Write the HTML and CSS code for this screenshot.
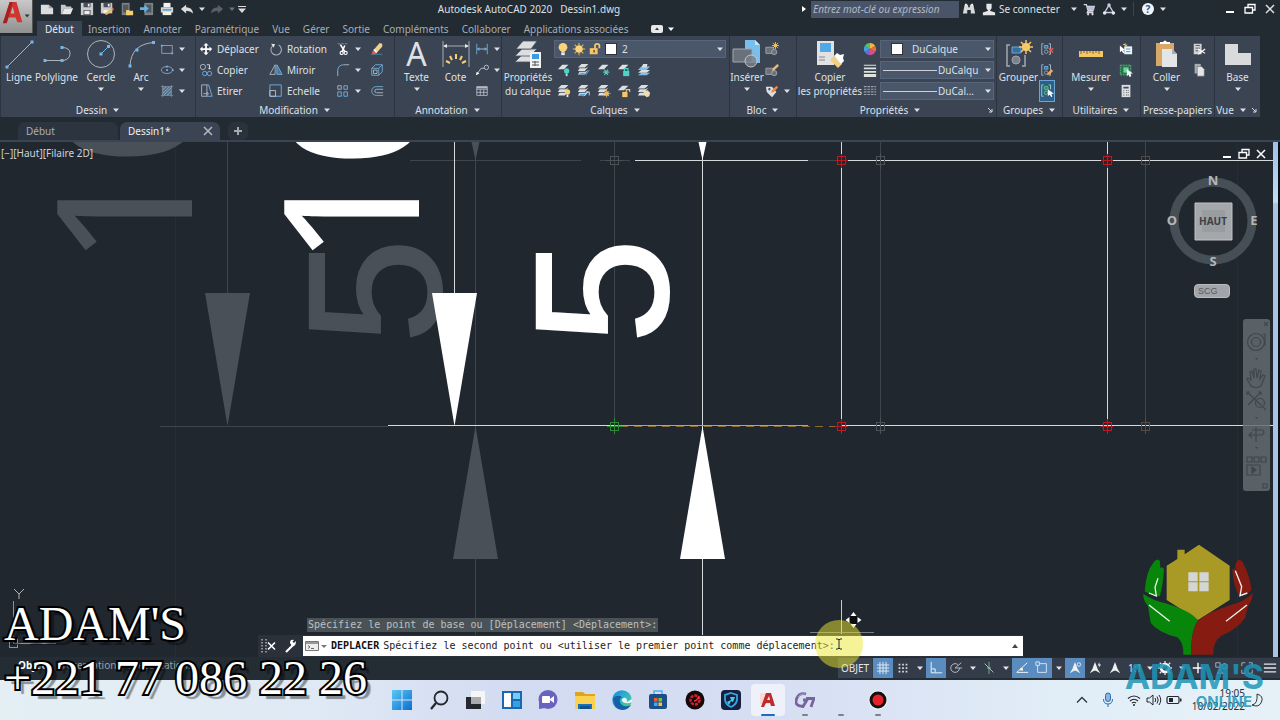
FILE: index.html
```html
<!DOCTYPE html>
<html lang="fr">
<head>
<meta charset="utf-8">
<title>Autodesk AutoCAD 2020 - Dessin1.dwg</title>
<link rel="stylesheet" href="styles.css">
</head>
<body>
<svg class="sprite" aria-hidden="true">
  <symbol id="caret" viewBox="0 0 8 8"><path d="M1 2.500h6L4 6z" fill="currentColor"/></symbol>
  <symbol id="new" viewBox="0 0 16 16"><path d="M1 3h9l5 4v7H1z" fill="#dcdcdc"/><path d="M10 3v4h5z" fill="#9a9ea2"/></symbol>
  <symbol id="open" viewBox="0 0 16 16"><path d="M1 3h5l1 2h6v2H5l-3 7H1z" fill="#c4c6c8"/><path d="M5 7h10l-3 7H2z" fill="#e8e8e8"/></symbol>
  <symbol id="save" viewBox="0 0 16 16"><path d="M1 1h14v14H1z" fill="#c9cbcd"/><path d="M4 1h8v5H4zM4 9h8v6H4z" fill="#4a4f55"/><path d="M5 10h6v4H5zM9 2h2v3H9z" fill="#eee"/></symbol>
  <symbol id="saveas" viewBox="0 0 16 16"><path d="M1 1h13v12H1z" fill="#c9cbcd"/><path d="M4 1h8v5H4z" fill="#4a4f55"/><path d="M9 2h2v3H9zM4 9h5v4H4z" fill="#eee"/><path d="M6 15l1-3 6-5 2 2-6 5z" fill="#f0b95a"/><path d="M13 7l2 2 1-1-2-2z" fill="#e36b5a"/></symbol>
  <symbol id="webopen" viewBox="0 0 16 16"><path d="M2 1h9v14H2z" fill="#7c8186"/><path d="M3.500 3h6v9h-6z" fill="#53585d"/><path d="M7 9h3l1 1h4v5H7z" fill="#f1cf72"/></symbol>
  <symbol id="websave" viewBox="0 0 16 16"><path d="M5 1h10v14H5z" fill="#7c8186"/><path d="M7 3h6v9H7z" fill="#53585d"/><path d="M0 6h5V3l5 4.500L5 12V9H0z" fill="#5fb4ea"/></symbol>
  <symbol id="print" viewBox="0 0 16 16"><path d="M4 1h8v5H4z" fill="#f2f2f2"/><path d="M1 6h14v6H1z" fill="#d2d4d6"/><path d="M3 8h10v2H3z" fill="#58a9d8"/><path d="M3 11h10v4H3z" fill="#f4f1df"/></symbol>
  <symbol id="undo" viewBox="0 0 16 16"><path d="M1 8l6-5v3q7 0 8 7-3-3-8-3v3z" fill="#dcdcdc"/></symbol>
  <symbol id="redo" viewBox="0 0 16 16"><path d="M15 8L9 3v3q-7 0-8 7 3-3 8-3v3z" fill="#596066"/></symbol>
  <symbol id="more" viewBox="0 0 8 8"><path d="M0 1h8v1H0zM0 3.500h8L4 8z" fill="#dcdcdc"/></symbol>
  <symbol id="bino" viewBox="0 0 16 16"><path d="M3 3h4v3h2V3h4l2 10h-5V9H6v4H1z" fill="#d6d8da"/><path d="M3.500 2h2v2h-2zM10.500 2h2v2h-2z" fill="#fff"/></symbol>
  <symbol id="person" viewBox="0 0 16 16"><path d="M5 2h6v5l-2 3 6 2v3H1v-3l6-2-2-3z" fill="#e4e6e8"/></symbol>
  <symbol id="cart" viewBox="0 0 16 16"><path d="M2 3h3l2 7h6M6 5h8l-1 4H7M7 10l-1 2h7" fill="none" stroke="#d6d8e4" stroke-width="1.500"/><path d="M6 5h8l-1 4H7z" fill="#b9bdd6"/><circle cx="7" cy="14" r="1.300" fill="#ddd"/><circle cx="12" cy="14" r="1.300" fill="#ddd"/></symbol>
  <symbol id="tri" viewBox="0 0 16 16"><path d="M8 3.500L13 12H3z" fill="none" stroke="#c6cadf" stroke-width="1.600"/><circle cx="8" cy="3.500" r="2" fill="#c6cadf"/><circle cx="3" cy="12.500" r="2" fill="#e7e9f2"/><circle cx="13" cy="12.500" r="2" fill="#e7e9f2"/></symbol>
  <symbol id="min" viewBox="0 0 12 12"><path d="M2 8h8v2H2z" fill="#fff"/></symbol>
  <symbol id="restore" viewBox="0 0 12 12"><path d="M4 4V1.500h7V7H8.500M1 4.500h7.500V10H1z" fill="none" stroke="#fff" stroke-width="1.300"/></symbol>
  <symbol id="close" viewBox="0 0 12 12"><path d="M2 2l8 8M10 2l-8 8" fill="none" stroke="currentColor" stroke-width="1.500"/></symbol>
  <symbol id="ruban" viewBox="0 0 12 8"><rect x="0" y="0" width="12" height="8" rx="2" fill="#e8e8e8"/><path d="M4 5h4L6 2.500z" fill="#333"/></symbol>

  <symbol id="ligne" viewBox="0 0 30 30"><path d="M3 28L28 3" stroke="#aeb4bc" fill="none"/><path d="M1.500 26.500h3v3h-3zM26.500 1.500h3v3h-3z" fill="#6fb7ec"/></symbol>
  <symbol id="poly" viewBox="0 0 30 30"><path d="M3 21.500h18q7-1 7-7t-8-6" stroke="#aeb4bc" fill="none"/><path d="M1.500 20h3v3h-3zM18.500 7h3v3h-3zM18.500 20h3v3h-3z" fill="#6fb7ec"/></symbol>
  <symbol id="cercle" viewBox="0 0 30 30"><circle cx="15" cy="15" r="13.500" stroke="#aeb4bc" fill="none"/><path d="M15 15l7-7" stroke="#6fb7ec" fill="none"/><path d="M13.500 13.500h3v3h-3zM21 6h3v3h-3z" fill="#6fb7ec"/></symbol>
  <symbol id="arc" viewBox="0 0 30 30"><path d="M4 27Q5 5 28 3.500" stroke="#aeb4bc" fill="none"/><path d="M2.500 25.500h3v3h-3zM9.500 9.500h3v3h-3zM26 2h3v3h-3z" fill="#6fb7ec"/></symbol>
  <symbol id="rect" viewBox="0 0 16 16"><path d="M2 4h12v9H2z" stroke="#9aa2ab" fill="none"/><path d="M1 3h2v2H1zM13 12h2v2h-2z" fill="#6fb7ec"/></symbol>
  <symbol id="ellipse" viewBox="0 0 16 16"><ellipse cx="8" cy="8" rx="6.500" ry="4" stroke="#9aa2ab" fill="none"/><path d="M7 7h2v2H7zM7 3h2v2H7zM13.500 7h2v2h-2z" fill="#6fb7ec"/></symbol>
  <symbol id="hatch" viewBox="0 0 16 16"><path d="M3 3h10v10H3z" fill="#5a6b7c"/><path d="M3 7l4-4M3 11l8-8M4 13l9-9M8 13l5-5" stroke="#7cb8e4"/><path d="M3 1v14M13 1v14M1 3h14M1 13h14" stroke="#9aa2ab" fill="none" stroke-width=".7"/></symbol>
  <symbol id="move" viewBox="0 0 16 16"><path d="M8 1l3 3H9v3h3V5l3 3-3 3V9H9v3h2l-3 3-3-3h2V9H4v2L1 8l3-3v2h3V4H5z" fill="#fff"/></symbol>
  <symbol id="copy" viewBox="0 0 16 16"><g fill="none"><circle cx="4.500" cy="4.500" r="3" stroke="#b4bac2"/><circle cx="6.500" cy="12" r="2.500" stroke="#6fb7ec"/><circle cx="12" cy="12" r="2.500" stroke="#6fb7ec"/><path d="M9 2h3v5M10.500 5.500L12 7l1.500-1.500" stroke="#e4e6e8"/></g></symbol>
  <symbol id="stretch" viewBox="0 0 16 16"><path d="M3 1v13h6V1zM5 11h5M9 9l2 2-2 2" stroke="#b4bac2" fill="none"/><path d="M9 1h2l4 13H9" stroke="#6fb7ec" fill="none"/></symbol>
  <symbol id="rotate" viewBox="0 0 16 16"><path d="M11 3.500a6 6 0 1 1-7 1" stroke="#aab0b8" stroke-width="1.200" fill="none"/><path d="M2.500 2L7 2.500 5 6.500z" fill="#e4e6e8"/></symbol>
  <symbol id="mirror" viewBox="0 0 16 16"><path d="M7 2v11H1z" stroke="#b4bac2" fill="none"/><path d="M9 2v11h6z" stroke="#6fb7ec" fill="#4d7396"/></symbol>
  <symbol id="scale" viewBox="0 0 16 16"><path d="M1 1h13v13H1z" stroke="#6fb7ec" fill="none"/><path d="M1 7.500h6.500V14H1z" stroke="#c4c8ce" fill="none"/></symbol>
  <symbol id="trim" viewBox="0 0 16 16"><path d="M2 2h12" stroke="#8d949c" stroke-dasharray="3 1"/><path d="M5 3l5 8M10 4l-3 7" stroke="#fff" stroke-width="1.800"/><circle cx="6.500" cy="12.500" r="1.800" stroke="#fff" fill="none" stroke-width="1.300"/><circle cx="11" cy="12.500" r="1.800" stroke="#fff" fill="none" stroke-width="1.300"/></symbol>
  <symbol id="fillet" viewBox="0 0 16 16"><path d="M2 15V9" stroke="#b4bac2"/><path d="M2 9q0-7 7-7" stroke="#6fb7ec" fill="none"/><path d="M9 2h6" stroke="#b4bac2"/></symbol>
  <symbol id="array" viewBox="0 0 16 16"><g fill="none"><path d="M2 2h4v4H2z" stroke="#b4bac2"/><path d="M9 2h4v4H9zM2 9h4v5H2zM9 9h4v5H9z" stroke="#6fb7ec"/></g></symbol>
  <symbol id="erase" viewBox="0 0 16 16"><path d="M1 14h13" stroke="#3f88b8"/><path d="M4 9l7-8 3 1v3l-7 8z" fill="#f2cf92"/><path d="M4 9l3 4-1 1H3l-1-2z" fill="#e05f4c"/><path d="M5 8l3 3.500-1 1L4 9z" fill="#fff"/></symbol>
  <symbol id="cube" viewBox="0 0 16 16"><path d="M2 6h8v8H2zM2 6l4-4h8v8l-4 4M10 6l4-4" stroke="#72b0dd" fill="none"/><path d="M4 8h4v4H4z" stroke="#b4bac2" fill="none"/></symbol>
  <symbol id="offset" viewBox="0 0 16 16"><path d="M15 3H7a5 5 0 0 0 0 10h8" stroke="#72b0dd" fill="none"/><path d="M15 6H7.500a2 2 0 0 0 0 4H15" stroke="#b4bac2" fill="none"/></symbol>
  <symbol id="cote" viewBox="0 0 30 30"><path d="M2 2v26M28 2v26M3 7h24" stroke="#a6acb4" fill="none"/><path d="M2 7l4-2v4zM28 7l-4-2v4z" fill="#e4e6e8"/><path d="M15 15v5M9 17l2 4M21 17l-2 4M5 22l4 2M25 22l-4 2" stroke="#f6cf74" stroke-width="2"/></symbol>
  <symbol id="dim" viewBox="0 0 16 16"><path d="M2 2v12M14 2v12" stroke="#72b0dd"/><path d="M3 8h10" stroke="#a9cdea"/><path d="M2 8l3-2v4zM14 8l-3-2v4z" fill="#72b0dd"/></symbol>
  <symbol id="leader" viewBox="0 0 16 16"><path d="M2 13l5-7h4" stroke="#c4c8ce" fill="none"/><path d="M1 14l1-4 3 2z" fill="#fff"/><circle cx="13" cy="5" r="2.500" stroke="#c4c8ce" fill="none"/></symbol>
  <symbol id="table" viewBox="0 0 16 16"><path d="M2 3h12v10H2zM2 6h12M2 9.500h12M6 6v7M10 6v7" stroke="#b4bac2" fill="none"/><path d="M2 3h12v2H2z" fill="#b4bac2"/></symbol>
  <symbol id="layers" viewBox="0 0 30 30"><g fill="#dcdee0" stroke="#4b535f" stroke-width=".8"><path d="M2 23l7-7h15l-7 7z"/><path d="M2 17l7-7h15l-7 7z"/><path d="M3 10l7-8h14l-6 8z"/></g><path d="M17 13h11v16H17z" fill="#f3f3f3"/><path d="M19 15h7v5h-7z" fill="#3d9be0"/><path d="M19 23h7M19 26h7M22 22v5" stroke="#555"/></symbol>
  <symbol id="bulb" viewBox="0 0 16 16"><circle cx="8" cy="6" r="5" fill="#f8d57c"/><path d="M6 10h4v2H6z" fill="#f8d57c"/><path d="M6 12h4v3H6z" fill="#e8e8e8"/></symbol>
  <symbol id="sun" viewBox="0 0 16 16"><circle cx="8" cy="8" r="4" fill="#f8d57c"/><path d="M8 1v14M1 8h14M3 3l10 10M13 3L3 13" stroke="#f2b84d" stroke-width="1.200"/><circle cx="8" cy="8" r="4" fill="#f8d57c"/></symbol>
  <symbol id="lock" viewBox="0 0 16 16"><path d="M2 7h9v7H2z" fill="#f6c568"/><path d="M8 7V4q0-2 2.500-2T13 4v3" stroke="#f6c568" stroke-width="2" fill="none"/><path d="M6 9h2v3H6z" fill="#8a5b20"/></symbol>
  <symbol id="l1" viewBox="0 0 16 16"><path d="M1 7l5-5h7L8 7z" fill="#dcdee0"/></symbol>
  <symbol id="l3" viewBox="0 0 16 16"><g fill="#dcdee0"><path d="M1 5l4-4h8L9 5zM1 9l2-3h7l3-2-4 5zM1 13l2-3h7l3-2-4 5z"/></g></symbol>
  <symbol id="la" viewBox="0 0 16 16"><use href="#l1"/><circle cx="11" cy="9" r="3" fill="#4fd3c4"/><path d="M10 12h2v3h-2z" fill="#bfe9e4"/></symbol>
  <symbol id="lb" viewBox="0 0 16 16"><use href="#l3"/><path d="M2 13l2-2h6l-2 2z" fill="#55a9e2"/><path d="M10 14l4-6" stroke="#55a9e2"/></symbol>
  <symbol id="lc" viewBox="0 0 16 16"><use href="#l1"/><path d="M7 10.500h7M8.500 7.500l4 6M12.500 7.500l-4 6" stroke="#57c9bd" stroke-width="1.300"/></symbol>
  <symbol id="ld" viewBox="0 0 16 16"><use href="#l1"/><path d="M7 9h7v6H7z" fill="#4fd3c4"/><path d="M8.500 9V6.500h4V9" fill="none" stroke="#4fd3c4" stroke-width="1.300"/></symbol>
  <symbol id="le" viewBox="0 0 16 16"><path d="M1 8l4-4h10l-4 4zM1 14l4-3h10l-4 3z" fill="#7cc0ee"/><path d="M1 11l4-3h10l-4 3zM5 5l2-4h5l-1 4z" fill="#dcdee0"/></symbol>
  <symbol id="lf" viewBox="0 0 16 16"><use href="#l3"/><circle cx="12" cy="9" r="3" fill="#f6cf74"/><path d="M11 12h2v3h-2z" fill="#eee"/></symbol>
  <symbol id="lg" viewBox="0 0 16 16"><use href="#l3"/><path d="M2 13l2-2h7l-2 2z" fill="#55a9e2"/><path d="M8 14l5-5M10 9h4v4" stroke="#cfe6f8" fill="none"/></symbol>
  <symbol id="lh" viewBox="0 0 16 16"><use href="#l3"/><circle cx="11" cy="11" r="2.500" fill="#f6cf74"/><path d="M11 6.500v9M6.500 11h9M8 8l6 6M14 8l-6 6" stroke="#f2b84d"/></symbol>
  <symbol id="li" viewBox="0 0 16 16"><use href="#l1"/><path d="M6 9h6v6H6z" fill="#f6c568"/><path d="M10.500 9V6.500h4V9" fill="none" stroke="#f6c568" stroke-width="1.300"/></symbol>
  <symbol id="lj" viewBox="0 0 16 16"><use href="#l3"/><path d="M8 8l4-1 3 3-1 4-3 1-4-4z" fill="#f0dcae"/></symbol>
  <symbol id="insert" viewBox="0 0 30 30"><path d="M13 1h10l5 5v18H13z" fill="#79bfee"/><path d="M23 1v5h5z" fill="#c6e3f7"/><path d="M1 10h19v13H1z" fill="#6a717a" stroke="#a2a8ae"/><circle cx="19" cy="22" r="6" fill="#7a818a" fill-opacity=".8" stroke="#c2c6ca"/></symbol>
  <symbol id="blk" viewBox="0 0 16 16"><path d="M1 6h9v7H1z" fill="#6a717a" stroke="#a2a8ae"/><circle cx="10.500" cy="11.500" r="3" fill="#6a717a" stroke="#a2a8ae"/></symbol>
  <symbol id="bnew" viewBox="0 0 16 16"><use href="#blk"/><circle cx="12" cy="4" r="2" fill="#f6cf74"/><path d="M12 0v8M8 4h8M9 1l6 6M15 1L9 7" stroke="#f2c05a"/></symbol>
  <symbol id="bedit" viewBox="0 0 16 16"><use href="#blk"/><path d="M8 9l1-3 5-5 2 2-5 5z" fill="#f2b868"/></symbol>
  <symbol id="btag" viewBox="0 0 16 16"><path d="M1 3h7l5 6-5 6-6-6z" fill="#dcdee0"/><circle cx="5" cy="6" r="1.300" fill="#444"/><path d="M7 10l1-3 5-5 2 2-5 5z" fill="#e98a4d"/></symbol>
  <symbol id="match" viewBox="0 0 30 30"><path d="M2 2h17v24H2z" fill="#e2e2e2"/><path d="M5 4h11v9H5z" fill="#52a8e6"/><path d="M4 18h6M4 21h6" stroke="#888"/><path d="M15 21l8 8 4-4-8-8z" fill="#f5cf7c"/><path d="M19 17l3-3 3 2 4-1-1 4 1 3-3 3z" fill="#fff"/></symbol>
  <symbol id="wheel" viewBox="0 0 16 16"><path d="M8 8V1a7 7 0 0 1 6 3.500z" fill="#f3b53c"/><path d="M8 8l6-3.500a7 7 0 0 1 0 7z" fill="#ef6b3c"/><path d="M8 8l6 3.500A7 7 0 0 1 8 15z" fill="#d94f8a"/><path d="M8 8v7a7 7 0 0 1-6-3.500z" fill="#7a62d8"/><path d="M8 8l-6 3.500a7 7 0 0 1 0-7z" fill="#3fa5e0"/><path d="M8 8L2 4.500A7 7 0 0 1 8 1z" fill="#53c26b"/></symbol>
  <symbol id="weight" viewBox="0 0 16 16"><path d="M1 2h14v1H1zM1 5h14v2H1zM1 9h14v2H1zM1 12.500h14V16H1z" fill="#dfe3dc"/></symbol>
  <symbol id="ltype" viewBox="0 0 16 16"><path d="M1 3h14M1 6h14M1 9h14M1 12h14" stroke="#9aa1a9" stroke-width="1.300" stroke-dasharray="3 1"/></symbol>
  <symbol id="launch" viewBox="0 0 8 8"><path d="M2 2l4 4M6 3v3H3" stroke="#d6dade" fill="none"/></symbol>
  <symbol id="group" viewBox="0 0 30 30"><path d="M6 6H3v21h3M18 27h3V16" stroke="#a2a8ae" fill="none" stroke-width="1.500"/><path d="M8 8h9v6H8z" fill="#356f9f" stroke="#6fa6cf"/><circle cx="12" cy="21" r="4" fill="#7a818a" stroke="#a2a8ae"/><circle cx="22" cy="8" r="4" fill="#f8d57c"/><path d="M22 1v14M15 8h14M17 3l10 10M27 3L17 13" stroke="#f5c862" stroke-width="1.500"/></symbol>
  <symbol id="g" viewBox="0 0 16 16"><path d="M4 2H2v12h2M10 2h2v12h-2" stroke="#b4bac2" fill="none"/><path d="M5 4h4v3H5z" stroke="#6fb7ec" fill="#356f9f"/><circle cx="7" cy="11" r="2" stroke="#9aa1a9" fill="none"/></symbol>
  <symbol id="ungroup" viewBox="0 0 16 16"><use href="#g"/><path d="M10 7l5 5M15 7l-5 5" stroke="#e2574c" stroke-width="1.800"/></symbol>
  <symbol id="gedit" viewBox="0 0 16 16"><use href="#g"/><path d="M8 14l1-3 4-4 2 2-4 4z" fill="#f2a95c"/></symbol>
  <symbol id="gsel" viewBox="0 0 16 16"><path d="M4 1H2v13h2M10 1h2v5" stroke="#a9d8c0" fill="none"/><path d="M5 3h4v3H5z" stroke="#5fd08a" fill="#2c7c57"/><circle cx="7" cy="10" r="2" stroke="#5fd08a" fill="none"/><path d="M9 6v8l2-2 2 3 1-1-1-3h3z" fill="#fff"/></symbol>
  <symbol id="ruler" viewBox="0 0 30 30"><path d="M3 12h24v6H3z" fill="#f3c763"/><path d="M5 12v3M8 12v2M11 12v3M14 12v2M17 12v3M20 12v2M23 12v3" stroke="#8a6420"/></symbol>
  <symbol id="qsel" viewBox="0 0 16 16"><path d="M6 5h9v9H6z" fill="#eef4f8"/><path d="M8 8h5M8 11h5" stroke="#3a8fce"/><path d="M1 4v8l2-2 2 3 1-1-1-3h2z" fill="#fff"/><path d="M4 3l4-2-1 2h3L7 6V4z" fill="#f6cf74"/></symbol>
  <symbol id="selall" viewBox="0 0 16 16"><path d="M1.500 2.500h12v11h-12z" stroke="#58c486" stroke-dasharray="2 1" fill="#2f6d51"/><path d="M5 5h6v6H5z" fill="#67d895"/><path d="M9 7v8l2-2 1 3 2-1-1-3h3z" fill="#fff"/></symbol>
  <symbol id="calc" viewBox="0 0 16 16"><path d="M3 1h10v14H3z" fill="#dcdee0"/><path d="M5 3h6v2H5zM5 7h1v1H5zM8 7h1v1H8zM10 7h1v1h-1zM5 9h1v1H5zM8 9h1v1H8zM10 9h1v1h-1zM5 12h1v1H5zM8 12h1v1H8zM10 12h1v1h-1z" fill="#444b54"/></symbol>
  <symbol id="paste" viewBox="0 0 30 30"><path d="M4 4h18v23H4z" fill="#d9a866"/><path d="M8 5V3h3q2-3 4 0h3v2z" fill="#fff"/><path d="M10 10h10l5 5v13H10z" fill="#e4e5e7"/><path d="M20 10v5h5z" fill="#a8abaf"/></symbol>
  <symbol id="cut" viewBox="0 0 16 16"><path d="M2 2h9v12H2z" fill="#cfd1d3"/><path d="M4 4h5M4 7h5M4 10h3" stroke="#555"/><path d="M7 8l8 5M7 14l8-6" stroke="#fff" stroke-width="1.300"/></symbol>
  <symbol id="copyc" viewBox="0 0 16 16"><path d="M3 1h7v11H3z" fill="#a9adb1"/><path d="M6 4h5l3 3v8H6z" fill="#e4e5e7" stroke="#5a6068" stroke-width=".6"/></symbol>
  <symbol id="base" viewBox="0 0 30 30"><path d="M2 5h13v9h13v12H2z" fill="#d9dadc"/></symbol>

  <symbol id="sgrid" viewBox="0 0 16 16"><path d="M4.500 1v14M8 1v14M11.500 1v14M1 4.500h14M1 8h14M1 11.500h14" stroke="#e8f1f8"/></symbol>
  <symbol id="sdots" viewBox="0 0 16 16"><path d="M3 3h2v2H3zM7 3h2v2H7zM11 3h2v2h-2zM3 7h2v2H3zM7 7h2v2H7zM11 7h2v2h-2zM3 11h2v2H3zM7 11h2v2H7zM11 11h2v2h-2z" fill="#d6dade"/></symbol>
  <symbol id="sortho" viewBox="0 0 16 16"><path d="M2.500 1v12.500H15M3 9h4v4" stroke="#fff" fill="none"/></symbol>
  <symbol id="spolar" viewBox="0 0 16 16"><path d="M12 8a5 5 0 1 1-2-4M7 8l7-6M7 8h8" stroke="#c4c8ce" fill="none"/></symbol>
  <symbol id="siso" viewBox="0 0 16 16"><path d="M3 3l10 10" stroke="#c4c8ce"/><path d="M8 1v14" stroke="#6fbf75"/><path d="M6 8h4" stroke="#c4c8ce"/></symbol>
  <symbol id="strack" viewBox="0 0 16 16"><path d="M14 2L2 13h13" stroke="#fff" fill="none"/><path d="M6 8h3v3H6z" fill="#f4f4d4"/></symbol>
  <symbol id="sosnap" viewBox="0 0 16 16"><path d="M3 3h10v10H3z" stroke="#dceafa" fill="none"/><path d="M1 1h4v4H1z" stroke="#dceafa" fill="#5b8cc0"/></symbol>
  <symbol id="sann" viewBox="0 0 16 16"><path d="M8 1q2 5 3 8l3 5-5-3H7l-5 3 3-5q1-3 3-8z" fill="#eef0f2"/></symbol>
  <symbol id="sannv" viewBox="0 0 16 16"><use href="#sann"/><circle cx="12.500" cy="4" r="2" fill="none" stroke="#eef0f2"/></symbol>
  <symbol id="sanna" viewBox="0 0 16 16"><use href="#sann"/><path d="M13 1l-2 4h2l-1 3 3-4h-2z" fill="#eef0f2"/></symbol>
  <symbol id="sgear" viewBox="0 0 16 16"><circle cx="8" cy="8" r="4.500" fill="none" stroke="#fff" stroke-width="3"/><path d="M8 0v4M8 12v4M0 8h4M12 8h4M2 2l3 3M11 11l3 3M14 2l-3 3M5 11l-3 3" stroke="#e0e4e8" stroke-width="1.500"/></symbol>
  <symbol id="splus" viewBox="0 0 16 16"><path d="M8 2v12M2 8h12" stroke="#fff" stroke-width="1.600"/></symbol>
  <symbol id="sshape" viewBox="0 0 16 16"><path d="M2 2h5v5H2zM4 14l3-5 3 5z" stroke="#b4bac2" fill="none"/><circle cx="12" cy="6" r="3" stroke="#b4bac2" fill="none"/></symbol>
  <symbol id="sfull" viewBox="0 0 16 16"><path d="M2 6V2h4M10 2h4v4M14 10v4h-4M6 14H2v-4" stroke="#b4bac2" fill="none"/></symbol>
  <symbol id="smenu" viewBox="0 0 16 16"><path d="M1 3.500h14M1 8h14M1 12.500h14" stroke="#e4e6e8" stroke-width="1.500"/></symbol>

  <linearGradient id="gwin" x1="0" y1="0" x2="1" y2="1"><stop offset="0" stop-color="#5cc8f5"/><stop offset="1" stop-color="#0a6fd0"/></linearGradient>
  <linearGradient id="gedge" x1="0" y1="0" x2="1" y2="1"><stop offset="0" stop-color="#1a86d8"/><stop offset=".5" stop-color="#2fb7c9"/><stop offset="1" stop-color="#5ed160"/></linearGradient>
</svg>

<div class="app">
  <header class="head">
    <button class="logo" aria-label="Menu de l'application"><svg viewBox="0 0 33 33"><path d="M3 23L10 1h7l6 21h-5l-2-5H9l-2 5zM11 13h4l-2-7z" fill="#d2342e"/><path d="M10 1h3L7 23H3z" fill="#a81f20"/><path d="M25.500 14h5L28 17z" fill="#333"/></svg></button>
    <div class="head-main">
      <div class="titlebar">
        <div class="quick">
          <button class="ic" aria-label="Nouveau"><svg><use href="#new"/></svg></button>
          <button class="ic" aria-label="Ouvrir"><svg><use href="#open"/></svg></button>
          <button class="ic" aria-label="Enregistrer"><svg><use href="#save"/></svg></button>
          <button class="ic" aria-label="Enregistrer sous"><svg><use href="#saveas"/></svg></button>
          <button class="ic" aria-label="Ouvrir Web"><svg><use href="#webopen"/></svg></button>
          <button class="ic" aria-label="Enregistrer Web"><svg><use href="#websave"/></svg></button>
          <button class="ic" aria-label="Imprimer"><svg><use href="#print"/></svg></button>
          <button class="ic" aria-label="Annuler"><svg><use href="#undo"/></svg></button>
          <button class="ic thin" aria-label="Historique"><svg class="car"><use href="#caret"/></svg></button>
          <button class="ic" aria-label="Rétablir"><svg><use href="#redo"/></svg></button>
          <button class="ic thin dim" aria-label="Historique"><svg class="car"><use href="#caret"/></svg></button>
          <button class="ic thin" aria-label="Personnaliser"><svg class="car"><use href="#more"/></svg></button>
        </div>
        <h1 class="title"><span>Autodesk AutoCAD 2020</span><span>Dessin1.dwg</span></h1>
        <div class="infobar">
          <svg class="play" viewBox="0 0 8 8"><path d="M2 1v6l4-3z" fill="#fff"/></svg>
          <input class="search" type="text" aria-label="Recherche" placeholder="Entrez mot-clé ou expression">
          <button class="ic" aria-label="Rechercher"><svg><use href="#bino"/></svg></button>
          <button class="ic" aria-label="Compte"><svg><use href="#person"/></svg></button>
          <button class="signin">Se connecter</button>
          <button class="ic thin" aria-label="Options du compte"><svg class="car"><use href="#caret"/></svg></button>
          <button class="ic" aria-label="App Store"><svg><use href="#cart"/></svg></button>
          <button class="ic" aria-label="Rester connecté"><svg><use href="#tri"/></svg></button>
          <button class="ic thin" aria-label="Plus"><svg class="car"><use href="#caret"/></svg></button>
          <span class="sep"></span>
          <button class="ic" aria-label="Aide"><span class="help">?</span></button>
          <button class="ic thin" aria-label="Options d'aide"><svg class="car"><use href="#caret"/></svg></button>
          <div class="win">
            <button class="ic" aria-label="Réduire"><svg class="s12"><use href="#min"/></svg></button>
            <button class="ic" aria-label="Restaurer"><svg class="s12"><use href="#restore"/></svg></button>
            <button class="ic" aria-label="Fermer"><svg class="s12"><use href="#close"/></svg></button>
          </div>
        </div>
      </div>
      <nav class="tabs">
        <button class="tab on">Début</button><button class="tab">Insertion</button><button class="tab">Annoter</button><button class="tab">Paramétrique</button><button class="tab">Vue</button><button class="tab">Gérer</button><button class="tab">Sortie</button><button class="tab">Compléments</button><button class="tab">Collaborer</button><button class="tab">Applications associées</button>
        <button class="tab toggle" aria-label="Réduire le ruban"><svg class="rb"><use href="#ruban"/></svg><svg class="car"><use href="#caret"/></svg></button>
      </nav>
    </div>
  </header>

  <div class="ribbon">
    <section class="panel p-draw">
      <div class="body">
        <button class="big first"><svg><use href="#ligne"/></svg><span>Ligne</span></button>
        <button class="big"><svg><use href="#poly"/></svg><span>Polyligne</span></button>
        <button class="big wide"><svg><use href="#cercle"/></svg><span>Cercle</span><svg class="car"><use href="#caret"/></svg></button>
        <button class="big slim"><svg><use href="#arc"/></svg><span>Arc</span><svg class="car"><use href="#caret"/></svg></button>
        <div class="col">
          <button class="sm" aria-label="Rectangle"><svg><use href="#rect"/></svg><svg class="car"><use href="#caret"/></svg></button>
          <button class="sm" aria-label="Ellipse"><svg><use href="#ellipse"/></svg><svg class="car"><use href="#caret"/></svg></button>
          <button class="sm" aria-label="Hachures"><svg><use href="#hatch"/></svg><svg class="car"><use href="#caret"/></svg></button>
        </div>
      </div>
      <button class="foot">Dessin<svg class="car"><use href="#caret"/></svg></button>
    </section>
    <section class="panel p-mod">
      <div class="body">
        <div class="col c-a">
          <button class="sm"><svg><use href="#move"/></svg>Déplacer</button>
          <button class="sm"><svg><use href="#copy"/></svg>Copier</button>
          <button class="sm"><svg><use href="#stretch"/></svg>Etirer</button>
        </div>
        <div class="col c-b">
          <button class="sm"><svg><use href="#rotate"/></svg>Rotation</button>
          <button class="sm"><svg><use href="#mirror"/></svg>Miroir</button>
          <button class="sm"><svg><use href="#scale"/></svg>Echelle</button>
        </div>
        <div class="col c-c">
          <button class="sm" aria-label="Ajuster"><svg><use href="#trim"/></svg><svg class="car"><use href="#caret"/></svg></button>
          <button class="sm" aria-label="Raccord"><svg><use href="#fillet"/></svg><svg class="car"><use href="#caret"/></svg></button>
          <button class="sm" aria-label="Réseau"><svg><use href="#array"/></svg><svg class="car"><use href="#caret"/></svg></button>
        </div>
        <div class="col">
          <button class="sm" aria-label="Effacer"><svg><use href="#erase"/></svg></button>
          <button class="sm" aria-label="Décomposer"><svg><use href="#cube"/></svg></button>
          <button class="sm" aria-label="Décaler"><svg><use href="#offset"/></svg></button>
        </div>
      </div>
      <button class="foot">Modification<svg class="car"><use href="#caret"/></svg></button>
    </section>
    <section class="panel p-ann">
      <div class="body">
        <button class="big"><b class="bigA" aria-hidden="true">A</b><span>Texte</span><svg class="car"><use href="#caret"/></svg></button>
        <button class="big"><svg><use href="#cote"/></svg><span>Cote</span></button>
        <div class="col">
          <button class="sm" aria-label="Linéaire"><svg><use href="#dim"/></svg><svg class="car"><use href="#caret"/></svg></button>
          <button class="sm" aria-label="Ligne de repère"><svg><use href="#leader"/></svg><svg class="car"><use href="#caret"/></svg></button>
          <button class="sm" aria-label="Tableau"><svg><use href="#table"/></svg></button>
        </div>
      </div>
      <button class="foot">Annotation<svg class="car"><use href="#caret"/></svg></button>
    </section>
    <section class="panel p-lay">
      <div class="body">
        <button class="big two"><svg><use href="#layers"/></svg><span>Propriétés<br>du calque</span></button>
        <div class="col grow">
          <div class="combo">
            <svg><use href="#bulb"/></svg><svg><use href="#sun"/></svg><svg><use href="#lock"/></svg><i class="swatch"></i>
            <select aria-label="Calque"><option>2</option></select><svg class="car"><use href="#caret"/></svg>
          </div>
          <div class="line">
            <button class="ic" aria-label="Désactiver"><svg><use href="#la"/></svg></button><button class="ic" aria-label="Isoler"><svg><use href="#lb"/></svg></button><button class="ic" aria-label="Geler"><svg><use href="#lc"/></svg></button><button class="ic" aria-label="Verrouiller"><svg><use href="#ld"/></svg></button><button class="ic" aria-label="Rendre courant"><svg><use href="#le"/></svg></button>
          </div>
          <div class="line">
            <button class="ic" aria-label="Activer tout"><svg><use href="#lf"/></svg></button><button class="ic" aria-label="Désisoler"><svg><use href="#lg"/></svg></button><button class="ic" aria-label="Dégeler"><svg><use href="#lh"/></svg></button><button class="ic" aria-label="Déverrouiller"><svg><use href="#li"/></svg></button><button class="ic" aria-label="Copier le calque"><svg><use href="#lj"/></svg></button>
          </div>
        </div>
      </div>
      <button class="foot">Calques<svg class="car"><use href="#caret"/></svg></button>
    </section>
    <section class="panel p-blk">
      <div class="body">
        <button class="big slim"><svg><use href="#insert"/></svg><span>Insérer</span><svg class="car"><use href="#caret"/></svg></button>
        <div class="col">
          <button class="sm" aria-label="Créer"><svg><use href="#bnew"/></svg></button>
          <button class="sm" aria-label="Modifier"><svg><use href="#bedit"/></svg></button>
          <button class="sm" aria-label="Attributs"><svg><use href="#btag"/></svg><svg class="car"><use href="#caret"/></svg></button>
        </div>
      </div>
      <button class="foot">Bloc<svg class="car"><use href="#caret"/></svg></button>
    </section>
    <section class="panel p-prop">
      <div class="body">
        <button class="big two"><svg><use href="#match"/></svg><span>Copier<br>les propriétés</span></button>
        <div class="col grow">
          <div class="prop"><svg><use href="#wheel"/></svg><div class="combo color"><i class="swatch"></i><select aria-label="Couleur"><option>DuCalque</option></select><svg class="car"><use href="#caret"/></svg></div></div>
          <div class="prop"><svg><use href="#weight"/></svg><div class="combo"><i class="rule"></i><select aria-label="Epaisseur"><option>DuCalqu</option></select><svg class="car"><use href="#caret"/></svg></div></div>
          <div class="prop"><svg><use href="#ltype"/></svg><div class="combo"><i class="rule"></i><select aria-label="Type de ligne"><option>DuCal...</option></select><svg class="car"><use href="#caret"/></svg></div></div>
        </div>
      </div>
      <div class="footrow"><button class="foot">Propriétés<svg class="car"><use href="#caret"/></svg></button><button class="launch" aria-label="Palette des propriétés"><svg class="car"><use href="#launch"/></svg></button></div>
    </section>
    <section class="panel p-grp">
      <div class="body">
        <button class="big"><svg><use href="#group"/></svg><span>Grouper</span></button>
        <div class="col">
          <button class="sm" aria-label="Dissocier"><svg><use href="#ungroup"/></svg></button>
          <button class="sm" aria-label="Modifier le groupe"><svg><use href="#gedit"/></svg></button>
          <button class="sm sel" aria-label="Sélection de groupe"><svg><use href="#gsel"/></svg></button>
        </div>
      </div>
      <button class="foot">Groupes<svg class="car"><use href="#caret"/></svg></button>
    </section>
    <section class="panel p-util">
      <div class="body">
        <button class="big wide"><svg><use href="#ruler"/></svg><span>Mesurer</span><svg class="car"><use href="#caret"/></svg></button>
        <div class="col">
          <button class="sm" aria-label="Sélection rapide"><svg><use href="#qsel"/></svg></button>
          <button class="sm" aria-label="Tout sélectionner"><svg><use href="#selall"/></svg></button>
          <button class="sm" aria-label="Calculatrice"><svg><use href="#calc"/></svg></button>
        </div>
      </div>
      <button class="foot">Utilitaires<svg class="car"><use href="#caret"/></svg></button>
    </section>
    <section class="panel p-clip">
      <div class="body">
        <button class="big"><svg><use href="#paste"/></svg><span>Coller</span><svg class="car"><use href="#caret"/></svg></button>
        <div class="col">
          <button class="sm" aria-label="Couper"><svg><use href="#cut"/></svg></button>
          <button class="sm" aria-label="Copier"><svg><use href="#copyc"/></svg></button>
        </div>
      </div>
      <button class="foot">Presse-papiers</button>
    </section>
    <section class="panel p-view">
      <div class="body">
        <button class="big"><svg><use href="#base"/></svg><span>Base</span><svg class="car"><use href="#caret"/></svg></button>
      </div>
      <div class="footrow"><button class="foot">Vue<svg class="car"><use href="#caret"/></svg></button><button class="launch" aria-label="Options de vue"><svg class="car"><use href="#launch"/></svg></button></div>
    </section>
  </div>

  <nav class="docs">
    <button class="doc">Début</button>
    <button class="doc on">Dessin1*<svg class="s12"><use href="#close"/></svg></button>
    <button class="add" aria-label="Nouveau dessin"><svg class="s12" viewBox="0 0 12 12"><path d="M6 2v8M2 6h8" stroke="#a4a9af" stroke-width="2"/></svg></button>
  </nav>

  <main class="view">
    <svg class="dwg" aria-label="Dessin">
      <g transform="translate(0 -142)" shape-rendering="crispEdges">
        <path class="faint" d="M175.500 142v515M1237.500 142v515"/>
        <path class="ghost" d="M227.500 142v152M160 426.500h228M475.500 142v515M410 160.500h171M614.500 142v284M808 160.500h33M880.500 142v284M600 160.500h30"/>
        <path class="ghost warm" d="M1145.500 142v290"/>
        <g class="gfill" shape-rendering="auto">
          <path d="M205 293h45l-22.500 133zM471.500 142h8l-4 18zM475.500 426l22.500 133h-45z"/>
          <text class="num" transform="translate(192 267) rotate(-90)">1</text>
          <text class="num arial" transform="translate(193 163) rotate(-90)">0</text>
          <text class="num arial" transform="translate(440 344) rotate(-90)">5</text>
        </g>
        <path class="white" d="M454.500 142v152M702.500 142v515M841.500 142v284M1107.500 142v284M388 425.500h226M635 160.500h173M841 160.500h3000M841 425.500h3000"/>
        <g class="wfill" shape-rendering="auto">
          <path d="M432 293h45l-22.500 133zM698.500 142h8l-4 18zM702.500 426l22.500 133h-45z"/>
          <text class="num" transform="translate(419 267) rotate(-90)">1</text>
          <text class="num arial" transform="translate(418 165) rotate(-90)">0</text>
          <text class="num arial" transform="translate(667 344) rotate(-90)">5</text>
        </g>
        <path d="M614 425.500h194" stroke="#b9a469"/><path d="M620 426.500h190M815 426.500h26" stroke="#8f6a2c" stroke-dasharray="8 6"/>
        <g fill="none">
          <path class="gr" d="M610.500 156.500h8v8h-8zM606 160.500h17M876.500 156.500h8v8h-8zM880.500 153v16M876.500 422.500h8v8h-8zM880.500 418v16"/>
          <path class="br" d="M1141.500 156.500h8v8h-8zM1141.500 422.500h8v8h-8zM1145.500 418v16"/>
          <path class="gn" d="M610.500 422.500h8v8h-8zM614.500 418v16M607 426.500h16"/>
          <path class="rd" d="M837.500 156.500h8v8h-8zM835 160.500h13M841.500 154v14M837.500 422.500h8v8h-8zM835 426.500h13M841.500 419v15M1103.500 156.500h8v8h-8zM1101 160.500h12M1107.500 154v14M1103.500 422.500h8v8h-8zM1101 426.500h12M1107.500 419v15"/>
        </g>
        <path d="M841.500 600v34" stroke="#c8cccf"/><path d="M810 632.500h64" stroke="#777d82"/>
        <path d="M13.500 601v42h42M9.500 639.500h8v8h-8z" stroke="#8b9196" fill="none"/>
        <path d="M14 589l5 5 5-5M19 594v5" stroke="#b0b5b9" fill="none" shape-rendering="auto"/>
        <g shape-rendering="auto"><circle cx="853.500" cy="620" r="5" fill="#0b0d10"/><path d="M853.500 612l3 4h-6zM853.500 628l3-4h-6zM845.500 620l4-3v6zM861.500 620l-4-3v6z" fill="#fff"/></g>
      </g>
    </svg>
    <div class="vlabel">[−][Haut][Filaire 2D]</div>
    <div class="vwin">
      <button aria-label="Réduire la vue"><svg class="s12"><use href="#min"/></svg></button>
      <button aria-label="Restaurer la vue"><svg class="s12"><use href="#restore"/></svg></button>
      <button aria-label="Fermer la vue"><svg class="s12"><use href="#close"/></svg></button>
    </div>
    <svg class="cubeview" viewBox="0 0 100 100">
      <circle cx="50" cy="50" r="39" fill="none" stroke="#474f56" stroke-width="9"/>
      <path d="M32 32h37v37H32z" fill="#a5a8aa" stroke="#c0c2c4"/><path d="M39 39h23v22H39z" fill="#999da0"/>
      <g class="dir"><text x="50" y="14">N</text><text x="50" y="95">S</text><text x="9" y="54">O</text><text x="91" y="54">E</text></g>
      <text class="haut" x="50" y="54">HAUT</text>
    </svg>
    <button class="scg">SCG</button>
    <div class="navbar">
      <svg viewBox="0 0 27 172"><g fill="none" stroke="#3f474c" stroke-width="1.200">
        <path d="M21 3l4 4M25 3l-4 4"/><circle cx="13" cy="23" r="8.500"/><circle cx="13" cy="23" r="4.500"/><path d="M20 15h2v12"/>
        <path d="M8 67l-4-7q1-2 4 1l-1-8 2-1 2 7 0-9h2l1 9 2-8 2 1-1 8 3-4 2 1-4 10q-5 3-10 0z"/>
        <path d="M4 73l15 14M18 73L5 86M4 76v-3h3M15 73h3v3"/><circle cx="17" cy="84" r="4.500"/><path d="M20 88l3 3"/>
        <path d="M13 108v15M6 116h13q4-3 0-5H9M9 113l-3 3 3 3"/>
        <path d="M4 138h5v5H4zM11 138h5v5h-5zM18 138h5v5h-5zM4 146h13v10H4z"/><path d="M9 148l4 3-4 3z" fill="#3f474c"/><path d="M20 165h4v4h-4z"/></g>
        <path d="M12 39h3l-1.500 2zM12 98h3l-1.500 2zM12 128h3l-1.500 2z" fill="#3f474c"/></svg>
    </div>
    <div class="cmd">
      <div class="hist">Spécifiez le point de base ou [Déplacement] &lt;Déplacement&gt;:</div>
      <div class="cmdrow">
        <div class="grip"><svg viewBox="0 0 44 20"><path d="M4 3v15M8 3v15" stroke="#a9aeb4" stroke-width="1.500" stroke-dasharray="1.500 1.500"/><path d="M10 6.500l7 7M17 6.500l-7 7" stroke="#fff" stroke-width="1.600"/><path d="M28 16l7-7" stroke="#fff" stroke-width="2.200"/><path d="M38 5l-2 2-1.500-1.500L36 4q-4-1-4 3l2 3q4 1 4-5z" fill="#fff"/></svg></div>
        <label class="prompt" for="cmdin"><svg class="term" viewBox="0 0 22 12"><path d="M.500 1.500h13v9H.500z" fill="#eee" stroke="#777"/><path d="M1 2h12v2H1z" fill="#999"/><path d="M3 5.500l2 1.500-2 1.500M6 8.500h3" stroke="#666" fill="none"/><path d="M16 5h6l-3 3z" fill="#777"/></svg><b>DEPLACER</b> Spécifiez le second point ou &lt;utiliser le premier point comme déplacement&gt;:</label>
        <input id="cmdin" class="cmdin" type="text">
        <button class="up" aria-label="Historique des commandes"><svg viewBox="0 0 8 8"><path d="M1 6h6L4 2z" fill="#444"/></svg></button>
      </div>
    </div>
  </main>

  <footer class="status">
    <div class="layouts"><button class="on">Objet</button><button>Présentation1</button><button>Présentation2</button><button aria-label="Nouvelle présentation">+</button></div>
    <div class="modes">
      <button class="obj">OBJET</button>
      <button class="ic hot" aria-label="Grille"><svg><use href="#sgrid"/></svg></button>
      <button class="ic" aria-label="Résolution"><svg><use href="#sdots"/></svg></button>
      <button class="ic arr" aria-label="Options de résolution"><svg class="car"><use href="#caret"/></svg></button>
      <button class="ic hot" aria-label="Ortho"><svg><use href="#sortho"/></svg></button>
      <button class="ic" aria-label="Polaire"><svg><use href="#spolar"/></svg></button>
      <button class="ic arr" aria-label="Options polaires"><svg class="car"><use href="#caret"/></svg></button>
      <button class="ic" aria-label="Isométrique"><svg><use href="#siso"/></svg></button>
      <button class="ic arr" aria-label="Options isométriques"><svg class="car"><use href="#caret"/></svg></button>
      <button class="ic hot" aria-label="Repérage"><svg><use href="#strack"/></svg></button>
      <button class="ic hot" aria-label="Accrochage"><svg><use href="#sosnap"/></svg></button>
      <button class="ic arr" aria-label="Options d'accrochage"><svg class="car"><use href="#caret"/></svg></button>
      <button class="ic hot" aria-label="Visibilité des annotations"><svg><use href="#sannv"/></svg></button>
      <button class="ic" aria-label="Echelle automatique"><svg><use href="#sanna"/></svg></button>
      <button class="ic" aria-label="Annotation"><svg><use href="#sann"/></svg></button>
      <button class="ic">1:1</button>
      <button class="ic thin" aria-label="Echelles"><svg class="car"><use href="#caret"/></svg></button>
      <button class="ic" aria-label="Espace de travail"><svg><use href="#sgear"/></svg></button>
      <button class="ic arr" aria-label="Espaces"><svg class="car"><use href="#caret"/></svg></button>
      <button class="ic" aria-label="Contrôle"><svg><use href="#splus"/></svg></button>
      <button class="ic roomy" aria-label="Isoler les objets"><svg><use href="#sshape"/></svg></button>
      <button class="ic roomy" aria-label="Plein écran"><svg><use href="#sfull"/></svg></button>
      <button class="ic" aria-label="Personnalisation"><svg><use href="#smenu"/></svg></button>
    </div>
  </footer>

  <div class="taskbar">
    <div class="apps">
      <button aria-label="Démarrer"><svg viewBox="0 0 20 20"><path d="M0 0h9.500v9.500H0zM10.500 0H20v9.500h-9.500zM0 10.500h9.500V20H0zM10.500 10.500H20V20h-9.500z" fill="url(#gwin)"/></svg></button>
      <button aria-label="Rechercher"><svg viewBox="0 0 20 20"><circle cx="12" cy="8" r="6.500" fill="none" stroke="#23262c" stroke-width="1.800"/><path d="M7 13l-5 6" stroke="#23262c" stroke-width="2.200"/></svg></button>
      <button aria-label="Vue des tâches"><svg viewBox="0 0 20 20"><path d="M6 1h14v13H6z" fill="#f6f6f6"/><path d="M1 7h15v12H1z" fill="#25282c"/><path d="M6 7h10v7H6z" fill="#a9abad"/></svg></button>
      <button aria-label="Widgets"><svg viewBox="0 0 20 20"><path d="M0 1h20v18H0z" fill="#1c66b4"/><path d="M2 3h7v14H2z" fill="#fff"/><path d="M11 3h7v6h-7z" fill="#6fd0f5"/><path d="M11 11h7v6h-7z" fill="#2fa3e4"/></svg></button>
      <button aria-label="Conversation"><svg viewBox="0 0 20 20"><circle cx="10" cy="9.500" r="9.500" fill="#6b62bd"/><path d="M1 12v7l6-1z" fill="#6b62bd"/><rect x="4" y="6" width="8" height="7" rx="1" fill="#fff"/><path d="M12 9l4-3v7l-4-3z" fill="#fff"/></svg></button>
      <button aria-label="Explorateur"><svg viewBox="0 0 20 20"><path d="M0 2h8l2 2h10v4H0z" fill="#dfa31e"/><path d="M0 6h20v13H0z" fill="#fbd150"/><path d="M3 14h14v5H3z" fill="#1a6fb8"/><path d="M5 16h10v3H5z" fill="#0d4f8f"/></svg></button>
      <button aria-label="Edge"><svg viewBox="0 0 20 20"><circle cx="10" cy="10" r="9.800" fill="url(#gedge)"/><path d="M1 8q5-4 9-1-4 3-1 7t10 1q-3 5-9 5-9-1-9-12z" fill="#1561a8"/><path d="M10 9q4-3 5 1 1 2-2 3 4 1 7-1V9l-5 3q-2 2-4 0-2-1-1-3z" fill="#e6f4f6"/></svg></button>
      <button aria-label="Store"><svg viewBox="0 0 20 20"><path d="M6 5V1h8v4" fill="none" stroke="#4db1ea" stroke-width="1.500"/><rect x="1" y="4" width="18" height="15" rx="2" fill="#1d4f86"/><path d="M6 8h3.500v3.500H6z" fill="#f05a3c"/><path d="M10.500 8H14v3.500h-3.500z" fill="#7cc043"/><path d="M6 12.500h3.500V16H6z" fill="#3fa9f0"/><path d="M10.500 12.500H14V16h-3.500z" fill="#f8c23c"/></svg></button>
      <button aria-label="Outil"><svg viewBox="0 0 20 20"><circle cx="10" cy="10" r="9.500" fill="#16090b"/><circle cx="10" cy="10" r="4.500" fill="none" stroke="#d8202c" stroke-width="2.500" stroke-dasharray="3 1"/><path d="M9 11q3 0 5-5" stroke="#ef3340" stroke-width="1.500" fill="none"/></svg></button>
      <button aria-label="Sécurité"><svg viewBox="0 0 20 20"><rect width="20" height="20" rx="4" fill="#15213d"/><path d="M10 3l6 2v5q-1 5-6 7-5-2-6-7V5z" fill="none" stroke="#35a4e8" stroke-width="1.800"/><path d="M6 12l4-2-1-3 5 0-2 5-2-1-2 4z" fill="#46c8f0"/></svg></button>
      <button class="run main" aria-label="AutoCAD"><svg viewBox="0 0 20 20"><path d="M2 3h9v11H2z" fill="#f6dcd4"/><path d="M3 17L8 3h5l4 13h-4l-1-3H8l-2 4zM9 10h3l-1-4z" fill="#bf2a2c"/></svg></button>
      <button class="run" aria-label="Gestionnaire"><svg viewBox="0 0 20 20"><path d="M11 4Q4 2 1.500 9T8 16.500L12 10H8M11 8.500h8L16 17" fill="none" stroke="#76649c" stroke-width="2.800"/><path d="M3 7q3-4 7-3" fill="none" stroke="#b3a6cc"/></svg></button>
      <button class="run" aria-label="Application"><svg viewBox="0 0 20 20"></svg></button>
      <button class="run" aria-label="Enregistreur"><svg viewBox="0 0 20 20"><circle cx="10" cy="10" r="9.500" fill="#f4f4f4"/><circle cx="10" cy="10" r="8.500" fill="#111"/><circle cx="10" cy="10" r="5.500" fill="#e8202a"/></svg></button>
    </div>
    <div class="tray">
      <svg viewBox="0 0 16 16"><path d="M3 10.500l5-5 5 5" fill="none" stroke="#30343a" stroke-width="1.300"/></svg>
      <svg viewBox="0 0 16 16"><rect x="5.500" y="1" width="5" height="8.500" rx="2.500" fill="#8fb4dc" stroke="#2a6cb8"/><path d="M3.500 7q0 5 4.500 5t4.500-5M8 12v3" fill="none" stroke="#2a6cb8"/></svg>
      <svg viewBox="0 0 16 16"><path d="M2 6.500q6-5 12 0M4 9q4-3.500 8 0M6 11q2-1.500 4 0" fill="none" stroke="#23262c" stroke-width="1.200"/><circle cx="8" cy="13" r="1" fill="#23262c"/></svg>
      <svg viewBox="0 0 16 16"><path d="M1 6h2.500L7 3v10l-3.500-3H1zM9 6q1.500 2 0 4M11 4.500q2.500 3.500 0 7M13 3q3.500 5 0 10" fill="none" stroke="#23262c"/></svg>
      <svg viewBox="0 0 16 16"><rect x="1" y="4.500" width="12" height="7" rx="1.500" fill="none" stroke="#23262c" stroke-width="1.200"/><path d="M3 6h4v4H3zM14 6.500h1.500v3H14z" fill="#23262c"/></svg>
      <div class="clock"><time>19:05</time><time>10/02/2022</time></div>
      <svg viewBox="0 0 16 16"><path d="M8 2q7 2 4.500 8T3 13q6-1 5-11z" fill="none" stroke="#30343a"/></svg>
    </div>
  </div>

  <div class="halo"><svg viewBox="0 0 8 12"><path d="M1 1h2l1 1 1-1h2M4 2v8M1 11h2l1-1 1 1h2" fill="none" stroke="#222"/></svg></div>
  <div class="caption"><div>ADAM'S</div><div>+221 77 086 22 26</div></div>
  <svg class="house" viewBox="334 40 336 336">
    <path d="M408 105l32-20V57h22v14l43-29 92 63v103l-95 60-94-60z" fill="#a89a24"/>
    <path d="M473 125h28v27h-28zM506 125h28v27h-28zM473 155h28v27h-28zM506 155h28v27h-28z" fill="#d4d6d6"/>
    <path d="M342 182q4-60 26-86 12-16 20-4l1 20q9-6 11 6-2 40-12 78-16 4-46-14z" fill="#07860b"/>
    <path d="M338 190q30 20 67 28 78 24 97 52-22 30-20 102h-24q2-36-18-52-60-16-80-44-4-24-8-50-16-18-14-36z" fill="#07860b"/>
    <g fill="#861b12"><path d="M605 118q4-8 9 0-2-20 8-30 12-2 18 14 20 40 22 76-18 20-36 18-18-30-21-78z"/><path d="M666 188q-26 26-69 36-70 24-95 46-22 30-20 102h66q-2-40 26-58 50-20 70-54l8-34q14-18 14-38z"/></g>
    <g fill="none" stroke="#f0f0e8" stroke-width="4"><path d="M382 143l-9 27 4 26-22-9M355 223l62 49M614 120l19 48-5 27 22-8M649 223l-63 49"/></g>
  </svg>
  <div class="brand"><div class="b1">ADAM'S</div><div class="b2">ONLINE</div></div>
</div>
</body>
</html>
```

FILE: styles.css
```css
:root {
  --dark: #222a32;
  --panel: #3b4453;
  --field: #4a566a;
  --ink: #dde1e6;
  --canvas: #20272f;
  --ui: "Noto Sans", "Open Sans", sans-serif;
}
* { box-sizing: border-box; }
body { margin: 0; background: var(--dark); color: var(--ink); font: 10px/14px var(--ui); }
button, input, select { font: inherit; color: inherit; margin: 0; padding: 0; border: 0; background: none; }
svg { display: block; flex: none; }
.sprite { position: absolute; width: 0; height: 0; }
.app { position: relative; display: flex; flex-direction: column; min-height: 100vh; overflow: hidden; white-space: nowrap; }

.ic { display: flex; align-items: center; justify-content: center; width: 20px; height: 18px; flex: none; }
.ic svg { width: 14px; height: 14px; }
.ic.thin { width: 10px; }
.dim { color: #6a7178; }
svg.car, .ic svg.car, .sm svg.car, .combo svg.car { width: 8px; height: 8px; }
svg.s12, .ic svg.s12 { width: 12px; height: 12px; }

/* header */
.head { display: flex; height: 36px; background: var(--dark); }
.logo { width: 33px; height: 33px; background: linear-gradient(#c9c9c9, #8f8f8f); border-right: 1px solid #555; flex: none; }
.head-main { flex: 1; display: flex; flex-direction: column; justify-content: space-between; padding-left: 4px; min-width: 0; }
.titlebar { display: flex; align-items: center; height: 18px; }
.quick { display: flex; }
.title { flex: 1; margin: 0; padding-left: 14px; display: flex; justify-content: center; gap: 8px; font-size: 10px; font-weight: 400; }
.infobar { display: flex; align-items: center; }
.play { width: 8px; height: 8px; margin: 0 3px; }
.search { width: 148px; height: 17px; background: #4a5468; padding: 0 2px; font-style: italic; }
.search::placeholder { color: #b3b9c3; opacity: 1; }
.signin { width: 70px; text-align: left; }
.sep { width: 1px; height: 14px; margin: 0 4px; background: #3c454e; }
.help { width: 12px; height: 12px; border-radius: 50%; background: #f2f4f8; color: #2a4fa8; font-weight: 700; line-height: 12px; }
.win { display: flex; margin-left: 52px; }
.tabs { display: flex; align-items: stretch; height: 15px; color: #a7adb5; }
.tab { padding: 0 7px 0 6px; line-height: 14px; }
.tab.on { background: var(--panel); color: #e8ebee; padding: 0 8px; }
.toggle { display: flex; align-items: center; gap: 4px; margin-left: 10px; color: #fff; }
.rb { width: 12px; height: 8px; }

/* ribbon */
.ribbon { display: flex; height: 81px; }
.panel { display: flex; flex-direction: column; background: var(--panel); border-left: 1px solid #2c343f; flex: none; }
.body { display: flex; flex: 1; padding-top: 3px; }
.foot { display: flex; align-items: center; justify-content: center; gap: 5px; height: 14px; line-height: 14px; }
.panel > .foot { width: 100%; }
.footrow { display: flex; }
.footrow .foot { flex: 1; }
.launch { padding: 3px 2px; }
.big { display: flex; flex-direction: column; align-items: center; width: 39px; }
.big > svg:first-child { width: 30px; height: 30px; }
.big span { margin-top: 1px; height: 14px; display: flex; justify-content: center; }
.big svg.car { margin-top: 1px; }
.big.first { width: 36px; }
.big.wide { width: 50px; }
.big.slim { width: 30px; }
.big.two span { display: block; height: 28px; text-align: center; }
.bigA { height: 30px; font: 400 32px/30px "Noto Sans", sans-serif; }
.col { display: grid; grid-template-rows: 20px 20px 20px; row-gap: 1px; align-content: start; }
.grow { flex: 1; }
.sm { display: flex; align-items: center; gap: 4px; height: 20px; }
.sm svg { width: 14px; height: 14px; }
.sm.sel { background: #2f5f86; outline: 1px solid #6aa5d4; }
.line { display: flex; align-items: center; }
.combo { display: flex; align-items: center; height: 18px; background: var(--field); border: 1px solid #57647a; flex: 1; min-width: 0; padding: 0 1px; }
.combo svg { width: 14px; height: 14px; }
.combo select { flex: 1; min-width: 0; appearance: none; }
.swatch { width: 12px; height: 12px; background: #fff; border: 1px solid #333; }
.p-draw { width: 195px; }
.p-draw .col { margin-left: 4px; }
.p-mod { width: 199px; }
.p-mod .body { padding-left: 3px; }
.c-a { width: 70px; }
.c-b { width: 67px; }
.c-c { width: 34px; }
.p-ann { width: 107px; }
.p-ann .body { padding-left: 2px; }
.p-lay { width: 228px; }
.p-lay .two { width: 52px; }
.p-lay .combo { margin: 1px 3px 1px 0; gap: 2px; padding-left: 1px; }
.p-lay .swatch { margin: 0 3px 0 1px; }
.p-blk { width: 67px; }
.p-blk .body { padding-left: 2px; }
.p-blk .col { margin-left: 3px; }
.p-prop { width: 200px; }
.p-prop .two { width: 66px; }
.prop { display: flex; align-items: center; gap: 3px; padding-right: 2px; }
.prop > svg { width: 14px; height: 14px; }
.rule { width: 54px; height: 1px; margin: 0 1px; background: #cfd3d8; }
.color .swatch { margin: 0 9px; }
.p-grp { width: 66px; }
.p-grp .big { width: 43px; }
.p-util { width: 78px; }
.p-util .big { width: 56px; }
.p-clip { width: 74px; }
.p-clip .big { width: 51px; }
.p-view { width: 46px; }
.p-view .big { width: 45px; }

/* document tabs */
.docs { display: flex; align-items: stretch; height: 25px; padding: 5px 0 0 18px; border-bottom: 2px solid var(--panel); gap: 2px; }
.doc { display: flex; align-items: center; justify-content: space-between; width: 100px; padding: 0 6px 0 8px; background: #2c343f; border-radius: 7px 7px 0 0; color: #a7adb5; }
.doc.on { background: var(--panel); color: #eef0f2; }
.doc svg { color: #b4bac2; }
.add { display: flex; align-items: center; justify-content: center; width: 20px; margin-left: 6px; background: #2a323b; border-radius: 6px; }

/* viewport */
.view { position: relative; flex: 1; min-height: 400px; background: var(--canvas); border-right: 2px solid #0b0e12; }
.view::after { content: ""; position: absolute; top: 0; right: 0; bottom: 0; width: 5px; background: linear-gradient(#9fc0e6, #c3dcf5 60px, #a8c4e4 62px); }
.dwg { position: absolute; inset: 0; width: 100%; height: 100%; }
.dwg path { stroke-width: 1; }
.faint { stroke: #262d36; }
.ghost { stroke: #3e464d; }
.ghost.warm { stroke: #454545; }
.white { stroke: #d5d9dc; }
.gfill { fill: #495057; }
.wfill { fill: #fff; }
.num { font: 188px "Noto Sans", sans-serif; }
.num.arial { font: 190px "Liberation Sans", Arial, sans-serif; stroke-width: 2px; }
.gfill .arial { stroke: #495057; }
.wfill .arial { stroke: #fff; }
.gr { stroke: #4a5157; }
.br { stroke: #574a45; }
.gn { stroke: #2c8a36; }
.rd { stroke: #c4161f; }
.vlabel { position: absolute; left: 1px; top: 4px; color: #cfd3d6; }
.vwin { position: absolute; right: 11px; top: 6px; display: flex; gap: 5px; z-index: 1; color: #fff; }
.cubeview { position: absolute; right: 15px; top: 29px; width: 100px; height: 100px; }
.dir { font: 700 13px var(--ui); fill: #b3b7ba; text-anchor: middle; }
.haut { font: 700 10px "Open Sans", sans-serif; fill: #3a3f44; text-anchor: middle; }
.scg { position: absolute; right: 48px; top: 142px; width: 36px; height: 14px; padding-left: 3px; border-radius: 4px; background: #a1a5ab; border: 1px solid #b8bbc0; color: #555b61; text-align: left; font: 9px/12px "Liberation Sans", sans-serif; }
.navbar { position: absolute; right: 8px; top: 177px; width: 27px; border-radius: 3px; background: rgba(100, 108, 112, .85); }

/* command line */
.cmd { position: absolute; left: 258px; right: 255px; bottom: 0; font: 10px/20px "DejaVu Sans Mono", monospace; }
.hist { width: fit-content; margin: 0 0 3px 49px; padding: 0 1px; line-height: 14px; background: #4a5256; color: #bcc1c3; }
.cmdrow { display: flex; height: 22px; background: #fff; border: solid #2a313a; border-width: 1px 0; color: #222; }
.grip { width: 45px; background: #2a313a; }
.grip svg { width: 44px; height: 20px; }
.prompt { display: flex; align-items: center; gap: 4px; padding-left: 2px; }
.prompt b { color: #111; }
.term { width: 22px; height: 12px; }
.cmdin { flex: 1; min-width: 0; outline: 0; }
.up { width: 12px; }
.up svg { width: 8px; height: 8px; }

/* status bar */
.status { display: flex; justify-content: space-between; align-items: flex-start; height: 23px; padding-top: 1px; background: #242c34; color: #9aa0a6; }
.layouts { display: flex; padding-left: 10px; }
.layouts button { padding: 0 3px; }
.layouts .on { color: #fff; font-weight: 700; padding: 0 8px; }
.modes { display: flex; align-items: center; height: 20px; background: #343c49; color: #e4e6e8; }
.obj { width: 34px; height: 20px; margin-right: 1px; background: var(--panel); }
.modes .ic { height: 20px; }
.ic.arr { width: 13px; }
.ic.roomy { width: 26px; }
.hot { background: #5b8cc0; }

/* taskbar */
.taskbar { display: grid; grid-template-columns: 1fr auto 1fr; align-items: center; height: 40px; background: linear-gradient(90deg, #e4eff4, #dfe9f5 25%, #d3dbf1 40%, #d6def3 60%, #e2eef7 85%, #e6f1f7); color: #2a2e34; }
.apps { grid-column: 2; display: flex; justify-content: space-between; width: 510px; }
.apps button { position: relative; display: flex; align-items: center; justify-content: center; width: 34px; height: 32px; border-radius: 4px; }
.apps svg { width: 20px; height: 20px; }
.apps .main { background: #eef1fa; }
.run::after { content: ""; position: absolute; left: 14px; bottom: 0; width: 6px; height: 2px; border-radius: 1px; background: #7c828a; }
.main.run::after { left: 10px; width: 14px; background: #1f6fb4; }
.tray { display: flex; align-items: center; justify-content: flex-end; gap: 4px; padding-right: 15px; }
.tray svg { width: 16px; height: 16px; }
.tray svg:first-child, .tray svg:nth-child(2) { margin-right: 6px; }
.clock { display: flex; flex-direction: column; text-align: right; margin-left: 6px; line-height: 13px; }

/* overlays */
.halo { position: absolute; left: 815px; bottom: 52px; width: 48px; height: 48px; border-radius: 50%; background: rgba(236, 232, 50, .5); display: grid; place-items: center; }
.halo svg { width: 8px; height: 12px; }
.caption { position: absolute; left: 4px; bottom: 15px; color: #fff; font: 48px/54px "Liberation Serif", "Times New Roman", serif; -webkit-text-stroke: 4px #000; paint-order: stroke fill; text-shadow: 5px 5px 1px rgba(0, 0, 0, .4); }
.house { position: absolute; right: 26px; bottom: 64px; width: 112px; height: 112px; }
.brand { position: absolute; right: 16px; bottom: 11px; color: rgba(30, 150, 185, .85); font-family: Inter, sans-serif; font-weight: 700; text-align: right; }
.b1 { font-size: 34px; line-height: 34px; }
.b2 { font-size: 15px; line-height: 15px; padding-right: 12px; }
```
